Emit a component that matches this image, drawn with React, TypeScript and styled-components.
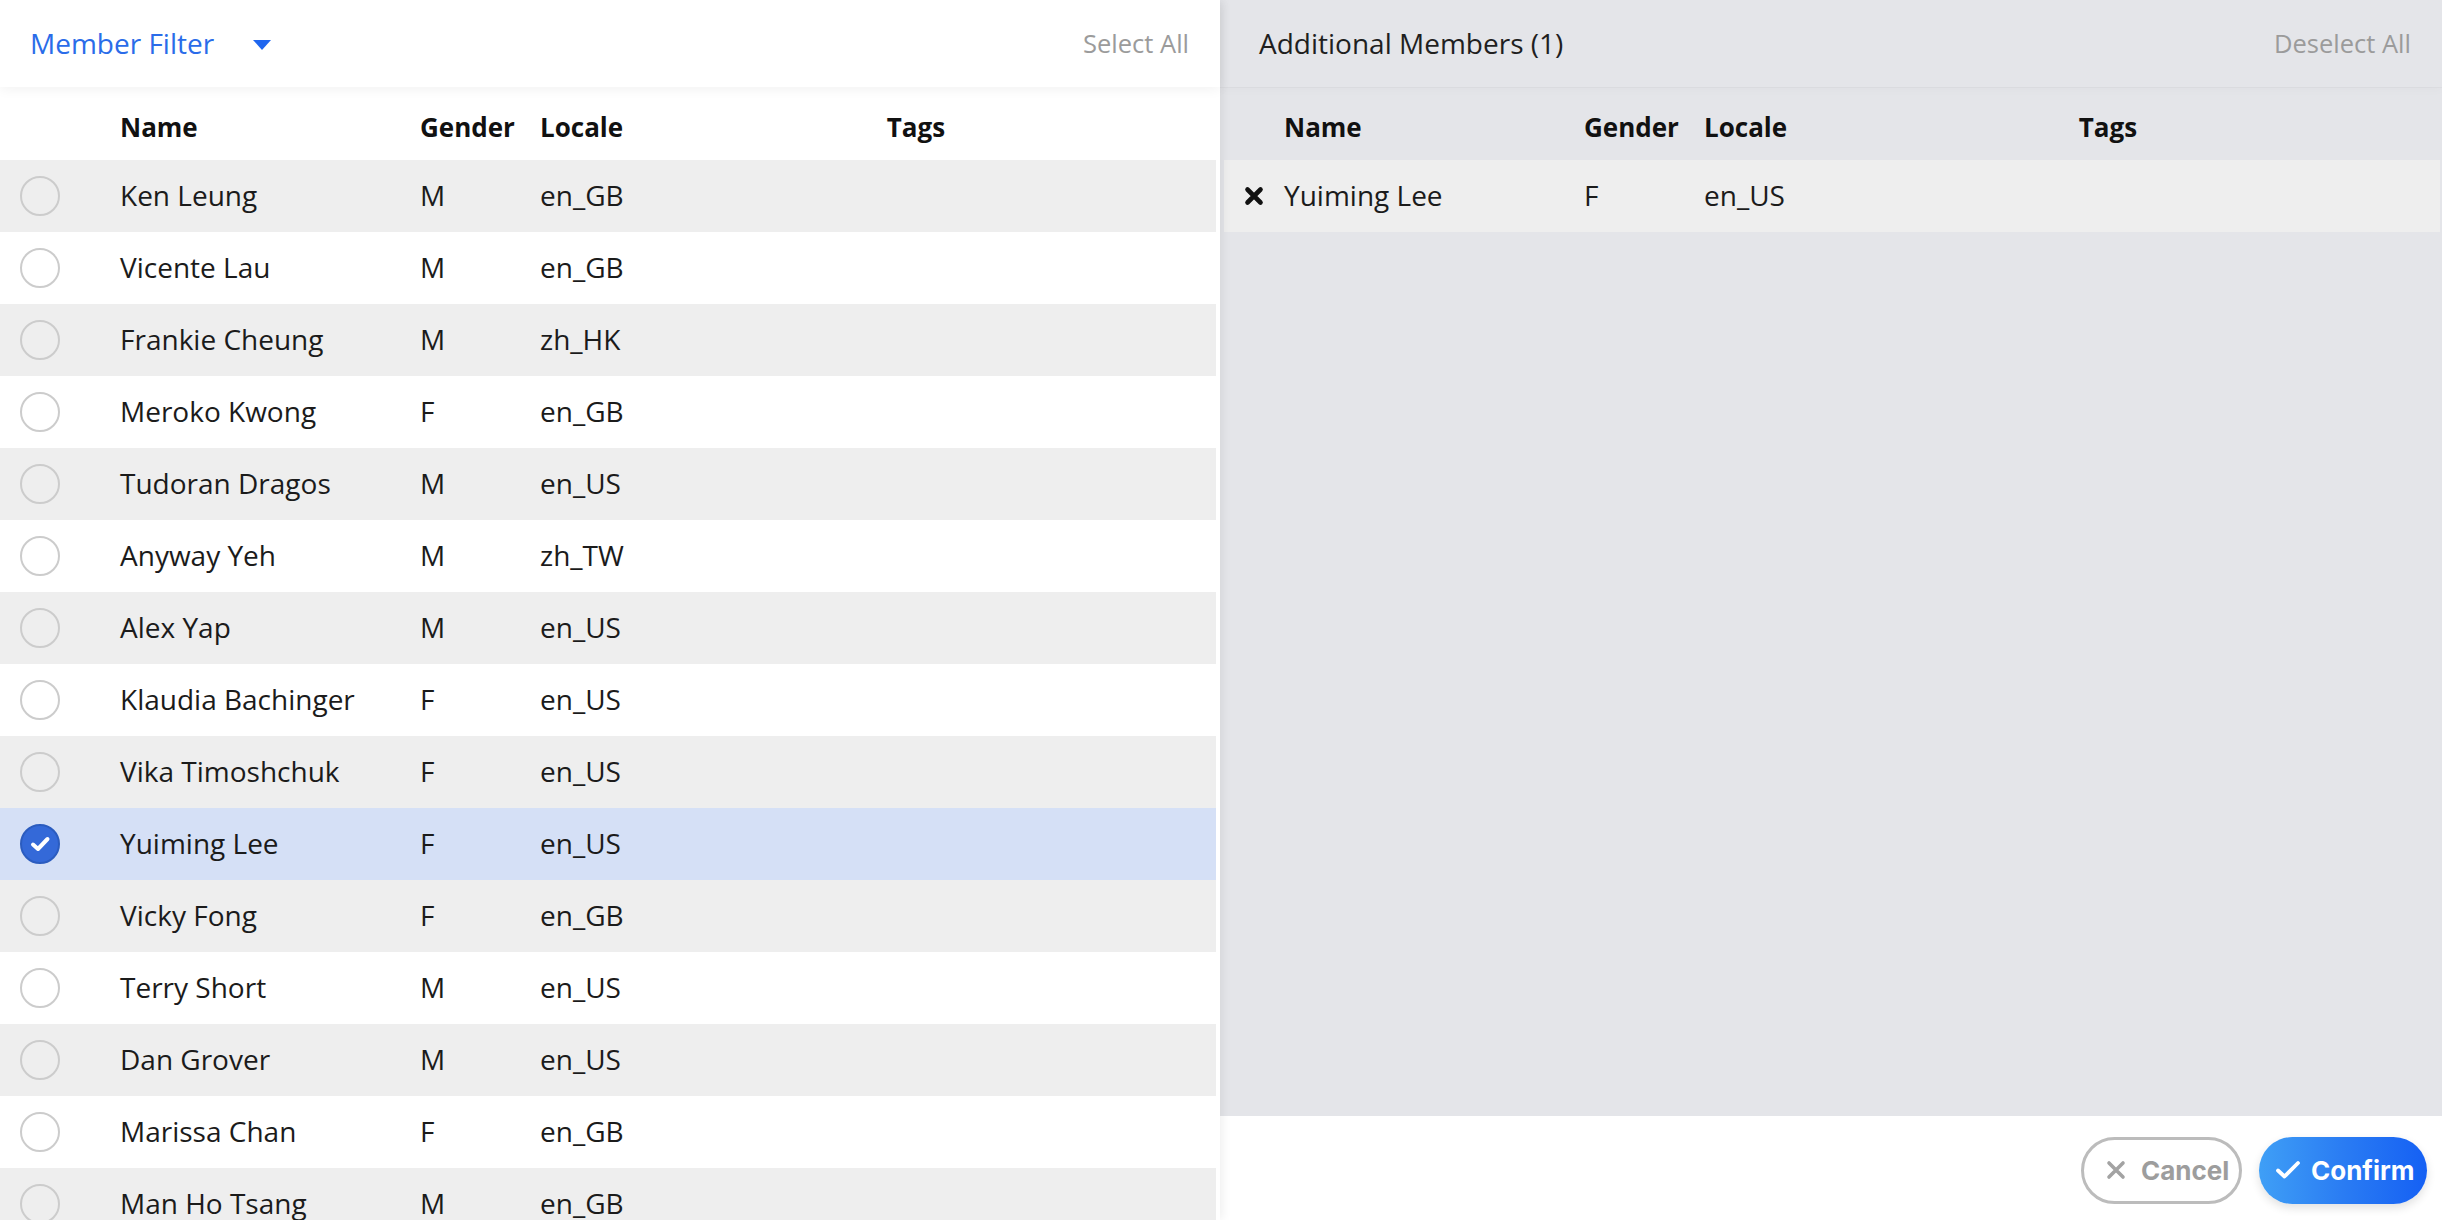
import React from 'react';
import styled, { createGlobalStyle } from 'styled-components';

interface IMember {
  name: string;
  gender: 'M' | 'F';
  locale: string;
}

const MEMBERS: IMember[] = [
  { name: 'Ken Leung', gender: 'M', locale: 'en_GB' },
  { name: 'Vicente Lau', gender: 'M', locale: 'en_GB' },
  { name: 'Frankie Cheung', gender: 'M', locale: 'zh_HK' },
  { name: 'Meroko Kwong', gender: 'F', locale: 'en_GB' },
  { name: 'Tudoran Dragos', gender: 'M', locale: 'en_US' },
  { name: 'Anyway Yeh', gender: 'M', locale: 'zh_TW' },
  { name: 'Alex Yap', gender: 'M', locale: 'en_US' },
  { name: 'Klaudia Bachinger', gender: 'F', locale: 'en_US' },
  { name: 'Vika Timoshchuk', gender: 'F', locale: 'en_US' },
  { name: 'Yuiming Lee', gender: 'F', locale: 'en_US' },
  { name: 'Vicky Fong', gender: 'F', locale: 'en_GB' },
  { name: 'Terry Short', gender: 'M', locale: 'en_US' },
  { name: 'Dan Grover', gender: 'M', locale: 'en_US' },
  { name: 'Marissa Chan', gender: 'F', locale: 'en_GB' },
  { name: 'Man Ho Tsang', gender: 'M', locale: 'en_GB' },
];

const SELECTED = ['Yuiming Lee'];

const LEFT_COLUMNS = '120px 300px 120px 76px 1fr';
const RIGHT_COLUMNS = '60px 300px 120px 72px 1fr';

export default function App() {
  const additional = MEMBERS.filter((m) => SELECTED.includes(m.name));

  return (
    <>
      <GlobalStyle />
      <Page>
        <LeftPanel>
          <PanelHeader>
            <FilterButton>
              Member Filter
              <Caret viewBox="0 0 18 10">
                <path d="M0 0 H18 L9 10 Z" fill="#1f66ef" />
              </Caret>
            </FilterButton>
            <HeaderLink>Select All</HeaderLink>
          </PanelHeader>
          <Table>
            <ColumnHeader $columns={LEFT_COLUMNS}>
              <span />
              <span>Name</span>
              <span>Gender</span>
              <span>Locale</span>
              <TagsCell>Tags</TagsCell>
            </ColumnHeader>
            {MEMBERS.map((member, index) => {
              const checked = SELECTED.includes(member.name);
              return (
                <Row
                  key={member.name}
                  $columns={LEFT_COLUMNS}
                  $striped={index % 2 === 0}
                  $selected={checked}
                >
                  <CheckCell>
                    <RadioCircle $checked={checked}>
                      {checked && (
                        <svg width="26" height="26" viewBox="0 0 26 26">
                          <path
                            d="M6 13.5 L11 18 L20.5 8"
                            fill="none"
                            stroke="#fff"
                            strokeWidth="4"
                            strokeLinecap="round"
                            strokeLinejoin="round"
                          />
                        </svg>
                      )}
                    </RadioCircle>
                  </CheckCell>
                  <span>{member.name}</span>
                  <span>{member.gender}</span>
                  <span>{member.locale}</span>
                  <TagsCell />
                </Row>
              );
            })}
          </Table>
        </LeftPanel>

        <RightPanel>
          <PanelHeader $muted>
            <PanelTitle>Additional Members ({additional.length})</PanelTitle>
            <HeaderLink>Deselect All</HeaderLink>
          </PanelHeader>
          <RightTable>
            <ColumnHeader $columns={RIGHT_COLUMNS} $inset>
              <span />
              <span>Name</span>
              <span>Gender</span>
              <span>Locale</span>
              <TagsCell>Tags</TagsCell>
            </ColumnHeader>
            {additional.map((member) => (
              <Row key={member.name} $columns={RIGHT_COLUMNS} $striped $inset>
                <RemoveCell>
                  <svg width="20" height="20" viewBox="0 0 20 20">
                    <path
                      d="M3.5 3.5 L16.5 16.5 M16.5 3.5 L3.5 16.5"
                      stroke="#111"
                      strokeWidth="4.6"
                      strokeLinecap="round"
                    />
                  </svg>
                </RemoveCell>
                <span>{member.name}</span>
                <span>{member.gender}</span>
                <span>{member.locale}</span>
                <TagsCell />
              </Row>
            ))}
          </RightTable>
          <Footer>
            <CancelButton>
              <svg width="20" height="20" viewBox="0 0 20 20">
                <path
                  d="M3 3 L17 17 M17 3 L3 17"
                  stroke="#a3a3a3"
                  strokeWidth="3.6"
                  strokeLinecap="round"
                />
              </svg>
              Cancel
            </CancelButton>
            <ConfirmButton>
              <svg width="26" height="22" viewBox="0 0 26 22">
                <path
                  d="M3 11.5 L9.5 17.5 L23 4"
                  fill="none"
                  stroke="#fff"
                  strokeWidth="3.8"
                  strokeLinecap="round"
                  strokeLinejoin="round"
                />
              </svg>
              Confirm
            </ConfirmButton>
          </Footer>
        </RightPanel>
      </Page>
    </>
  );
}

const GlobalStyle = createGlobalStyle`
  html, body {
    margin: 0;
    padding: 0;
    height: 100%;
    overflow: hidden;
    background: #ffffff;
  }
  body {
    font-family: 'Open Sans', 'Noto Sans', sans-serif;
    color: #1b1b1b;
  }
  * {
    box-sizing: border-box;
  }
`;

const Page = styled.div`
  display: flex;
  height: 100vh;
  width: 100vw;
  overflow: hidden;
`;

const LeftPanel = styled.section`
  position: relative;
  z-index: 2;
  width: 1220px;
  flex-shrink: 0;
  display: flex;
  flex-direction: column;
  background: #ffffff;
  box-shadow: 2px 0 10px rgba(0, 0, 0, 0.07);
`;

const RightPanel = styled.section`
  flex-grow: 1;
  display: flex;
  flex-direction: column;
  background: #e4e5e9;
`;

const PanelHeader = styled.header<{ $muted?: boolean }>`
  position: relative;
  z-index: 1;
  height: 87px;
  flex-shrink: 0;
  display: flex;
  align-items: center;
  justify-content: space-between;
  padding: 0 31px 0 ${({ $muted }) => ($muted ? '39px' : '30px')};
  background: ${({ $muted }) => ($muted ? '#e4e5e9' : '#ffffff')};
  box-shadow: ${({ $muted }) =>
    $muted
      ? '0 1px 0 rgba(0, 0, 0, 0.025), 0 3px 10px rgba(0, 0, 0, 0.025)'
      : '0 2px 12px rgba(0, 0, 0, 0.06)'};
`;

const FilterButton = styled.div`
  display: flex;
  align-items: center;
  gap: 39px;
  font-size: 28px;
  color: #2a6ce9;
  padding-bottom: 2px;
`;

const Caret = styled.svg`
  width: 18px;
  height: 10px;
  margin-top: 4px;
`;

const PanelTitle = styled.div`
  font-size: 28px;
  color: #1f1f1f;
  padding-bottom: 2px;
`;

const HeaderLink = styled.div`
  font-size: 25.5px;
  color: #9b9b9b;
  padding-bottom: 2px;
`;

const Table = styled.div`
  display: flex;
  flex-direction: column;
  padding-right: 4px;
`;

const RightTable = styled.div`
  flex-grow: 1;
  display: flex;
  flex-direction: column;
`;

const ColumnHeader = styled.div<{ $columns: string; $inset?: boolean }>`
  display: grid;
  grid-template-columns: ${({ $columns }) => $columns};
  align-items: center;
  height: 73px;
  padding-top: 6px;
  margin: ${({ $inset }) => ($inset ? '0 2px 0 4px' : '0')};
  font-size: 26px;
  font-weight: 700;
  color: #111111;
`;

const Row = styled.div<{
  $columns: string;
  $striped?: boolean;
  $selected?: boolean;
  $inset?: boolean;
}>`
  display: grid;
  grid-template-columns: ${({ $columns }) => $columns};
  align-items: center;
  height: 72px;
  flex-shrink: 0;
  padding-bottom: 3px;
  margin: ${({ $inset }) => ($inset ? '0 2px 0 4px' : '0')};
  font-size: 28px;
  color: #1b1b1b;
  background: ${({ $striped, $selected }) =>
    $selected ? '#d5e0f6' : $striped ? '#eeeeee' : '#ffffff'};
`;

const CheckCell = styled.div`
  display: flex;
  align-items: center;
  padding-left: 20px;
  margin-top: 3px;
`;

const RadioCircle = styled.div<{ $checked: boolean }>`
  width: 40px;
  height: 40px;
  border-radius: 50%;
  display: flex;
  align-items: center;
  justify-content: center;
  border: 2px solid ${({ $checked }) => ($checked ? '#2b5cbf' : '#cccccc')};
  background: ${({ $checked }) => ($checked ? '#3469d8' : 'transparent')};
`;

const RemoveCell = styled.div`
  display: flex;
  align-items: center;
  padding-left: 20px;
  margin-top: 3px;
`;

const TagsCell = styled.span`
  justify-self: center;
`;

const Footer = styled.footer`
  height: 104px;
  flex-shrink: 0;
  display: flex;
  align-items: center;
  justify-content: flex-end;
  gap: 17px;
  padding: 4px 15px 0 0;
  background: #ffffff;
`;

const PillButton = styled.button`
  height: 67px;
  display: flex;
  align-items: center;
  border-radius: 34px;
  font-family: Inter, 'Liberation Sans', sans-serif;
  font-size: 26px;
  font-weight: 700;
  cursor: pointer;
`;

const CancelButton = styled(PillButton)`
  width: 161px;
  padding: 0 0 0 22px;
  gap: 15px;
  border: 3px solid #bcbcbc;
  background: #ffffff;
  color: #9d9d9d;
`;

const ConfirmButton = styled(PillButton)`
  width: 168px;
  padding: 0 0 0 16px;
  gap: 10px;
  border: none;
  color: #ffffff;
  background: linear-gradient(90deg, #3f9ff6 0%, #2a7cf3 50%, #1560f4 100%);
  box-shadow: 0 4px 10px rgba(0, 0, 0, 0.12);
`;
